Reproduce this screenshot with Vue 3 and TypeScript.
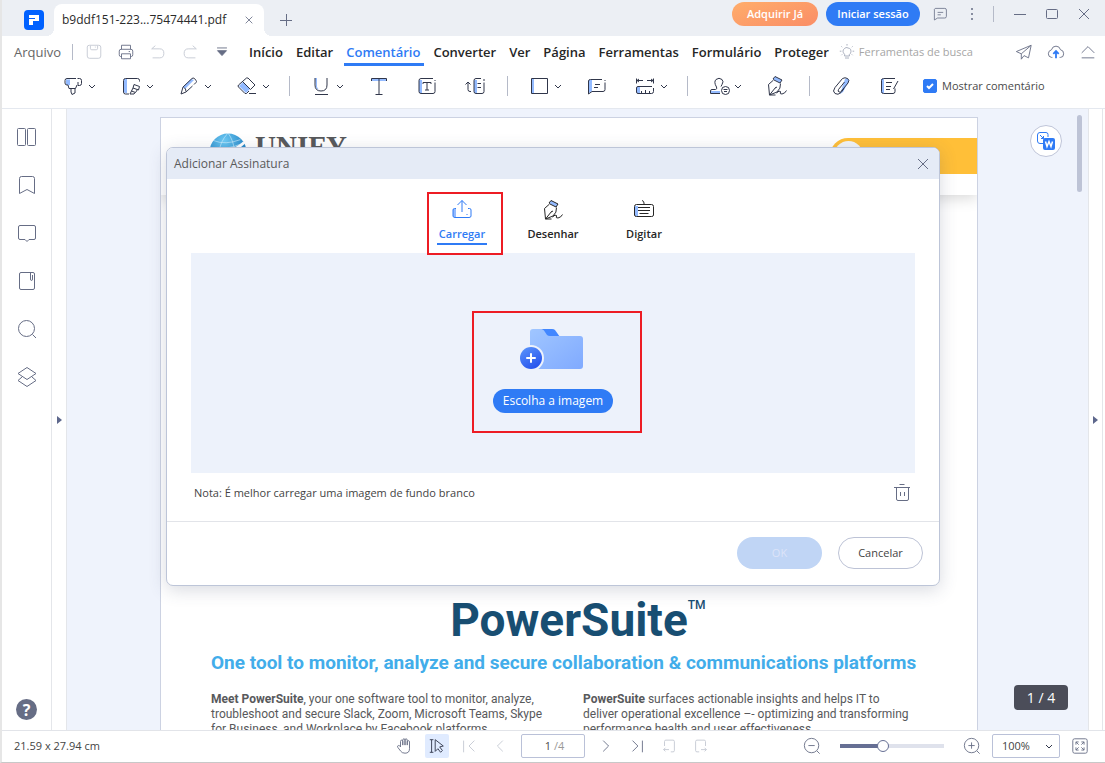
<script setup lang="ts">
import { ref } from 'vue'

interface Tool {
  icon?: string
  label?: string
  menu?: boolean
}

const menus = ['Início', 'Editar', 'Comentário', 'Converter', 'Ver', 'Página', 'Ferramentas', 'Formulário', 'Proteger']
const activeMenu = ref('Comentário')
const showComments = ref(true)
const pageNumber = ref('1')
const zoom = ref('100%')
const zoomLevel = ref(40)
const signatureTab = ref('Carregar')

const icons: Record<string, string> = {
  highlighter:
    '<path class="tint" d="M3 3.500h4v5.500h-3l-1-1z"/><path d="M13 2.500H4q-2 0-2 2V7q0 2 2 2h1l1 3.500h6.500L14 9M14.500 2.500h2q2 0 2 2v3q0 2-2 2H15V6M8 12.500v3.500l1 2.500 3-1.500v-4.500"/>',
  area:
    '<path class="tint" d="M3 3h3v14H4l-1-1z"/><path d="M18.500 5.500v-1q0-2-2-2H4.500q-2 0-2 2V16q0 2 2 2H8M13 8.500l5.500 2-1 3.500-5.500-2zM12 12l-1.500 3 4 1.500 2-3M10.500 15 9 18h4l1-1.500"/>',
  pencil:
    '<path class="tint" d="M4 11 12 3l3 1-9 9z"/><path d="m2 18 2-7 9-8.500q1-1 2.500 0l1.500 2q1 1 0 2L15 8.500M13.500 10 7 16l-5 2M5 11.500q2 1 2 4"/>',
  eraser:
    '<path class="tint" d="m2 10 4-4 7 7-4 4z"/><path d="m11 2 7 7-4.500 4.500M12 15l-2.500 2.500H8L1.500 11q-1-1 0-2l8-7h1.500M6 6l7.500 7.500M12 17.500h7"/>',
  underline:
    '<path class="tint" d="M4 2h2v9l2 3-3-2z"/><path d="M4 2v7q0 6 6 6t6-6V2M4 18.500h13"/>',
  text: '<path class="tint" d="M3 2h14v3H3z"/><path d="M2.500 5V2.500h15V5M10 3v15M6.500 18.500h7"/>',
  textbox:
    '<path class="tint" d="M2 4h3v13H3l-1-1z"/><path d="M16 2.500H4q-2 0-2 2v11q0 2 2 2h12q2 0 2-2v-9M18 5V4M6 8V6.500h8V8M10 6.500V14M8 14h4"/>',
  callout:
    '<path class="tint" d="M9 4h3v13h-2l-1-1z"/><path d="M16 2.500h-5q-2 0-2 2v11q0 2 2 2h6q2 0 2-2v-9M19 5V3M12.500 7.500H16M12.500 11.500H16M6 15.500H5q-2 0-2-2V6.500M.5 8.500l2.500-2.500 2.500 2.500"/>',
  shape: '<path class="tint" d="M2 3h3v14H2z"/><path d="M2.500 2.500h16v15h-16z"/>',
  note:
    '<path class="tint" d="M2 4h3v11l-3 2z"/><path d="M15 3.500H3.500q-2 0-2 1.500v13L5 15.500h11q2 0 2-2v-7M18 5V4M8 8.500h5M7 11.500h4"/>',
  measure:
    '<path class="tint" d="M2 11h3v6H2z"/><path d="M1.500 2.500v5M18.500 2.500v5M2 4.500h6M12 4.500h6M4 3 2 4.500 4 6M16 3l2 1.500L16 6M17 10.500H3q-1.500 0-1.500 1.500v4q0 1.500 1.500 1.500h13.500q2 0 2-2V12M6.500 17v-2M10.500 17v-3M14.500 17v-2"/>',
  stamp:
    '<path class="tint" d="M2 15h9v3H2z"/><path d="M11 17.500H1.500V15q0-1.500 1.500-1.500h3.500q2-.5 1-2.500-3-5-.5-7.500 3-2.500 6 0 2 2 0 5l-1 2"/><circle cx="16.500" cy="14.500" r="4"/><path d="M14.500 13.500h4M15 15.500h3"/>',
  pen:
    '<path class="tint" d="m6 3 2-2.500L15 4l-2 3z"/><path d="M8 .5 15 4M6 3 8 .5M6 3.500l7 3.500 2-3M6 4.500 1.500 8.500l1 10.500h6M2.500 19l7.500-3q4-3.500 3.500-8.500M2.500 19l6-7.500M8 12l2-1M9.500 17q3-3 4-1.500-1 3 1.500 2.500 3-.5 4.500-3.500"/>',
  clip:
    '<path class="tint" d="m14 3 3-1 1 3-6 11-3 2z"/><path d="m13.500 6-6 7.500q-1 2 .5 2.500t2.500-1L17 7q2-3-.5-4.500t-5 0L4 11.500q-3 4 0 6t6-1l3-4"/>',
  manage:
    '<path class="tint" d="M2 3h3v14H2z"/><path d="M16 2.500H4.500q-2 0-2 2V15.500q0 2 2 2h9.500q2 0 2-2v-3M7 6.500h6M7 10.500h5M7 13.500h4M19 5l-4.500 8"/>',
  upload:
    '<path class="tint" d="M1 9h3v8H2l-1-1z"/><path d="M4 8.500H2.500Q1 8.500 1 10v6q0 1.500 2 1.500h14q2 0 2-1.500v-6q0-1.500-1.500-1.500H16M10 12V.5M5.500 5 10 .5 14.500 5M14.500 14.500h1"/>',
  keyboard:
    '<path class="tint" d="M1 6h3v10H1z"/><path d="M3 4.500h14.500q2 0 2 2V15q0 1.500-2 1.500H2.500q-2 0-2-1.500V6.500q0-2 2-2zM10 4.500V3Q10 1 8 .5M4 7.500h12M4 10.500h12M5.500 13.500h9"/>',
  save: '<path d="M5 2.500h10q2.500 0 2.500 2v10q0 2.500-2.500 2.500H5q-2.500 0-2.500-2.500v-10q0-2 2.500-2zM6 3v3q0 1.500 1.500 1.500h5q1.500 0 1.500-1.500V3M11.500 4v1"/>',
  print: '<path d="M5 7V2.500h10V7M5 15H4q-1.500 0-1.500-2V9q0-2 2-2h11q2 0 2 2v4q0 2-1.500 2h-1M5 12h10v5.500H5zM13 9.500h1.500"/>',
  undo: '<path d="M7 3 3 6.500h9q4.500 0 4.500 5t-4.500 5H4"/>',
  redo: '<path d="m13 3 4 3.500H8q-4.500 0-4.500 5t4.500 5h8"/>',
  bulb: '<path d="M7 13q-2-2-2-4t2-3.500T10 4.500t3 1T15 9t-2 4v2H7zM7.500 17.500h5M10 0v2M3 3l1 1M17 3l-1 1M1 9h2M17 9h2M3 14l1-1M17 14l-1-1"/>',
  send: '<path d="M18 2.500 1.500 9.500 7 12v6l3-4 5 2.500zM17.500 3 7 12"/>',
  cloud: '<path d="M6 16H5q-3.500-.5-3.500-4T5 7.500q1-4 5-4t5 4q3.500.500 3.500 4.500T15 16h-1"/><path class="strong" d="M10 17V9.500M7 12l3-3 3 3"/>',
  collapse: '<path d="m3 11 7-7 7 7M3 16.500h14"/>',
  chat: '<path d="M4 3h12q2 0 2 2v8q0 2-2 2H7l-4 2.500V4zM7 8h7M7 11h4"/>',
  pages: '<path d="M1.500 1.500h6q1 0 1 1v15q0 1-1 1h-6q-1 0-1-1v-15q0-1 1-1zM11.500 1.500h6q1 0 1 1v15q0 1-1 1h-6q-1 0-1-1v-15q0-1 1-1z"/>',
  bookmark: '<path d="M2.500 18.500v-15q0-2 2-2h11q2 0 2 2v15L10 14.500z"/>',
  comment: '<path d="M3 2.500h14q1.500 0 1.500 1.500v11q0 1.500-1.500 1.500h-5l-2 2-2-2H3Q1.500 16.500 1.500 15V4Q1.500 2.500 3 2.500z"/>',
  attach: '<path d="M4 1.500h12q1.500 0 1.500 1.500v14q0 1.500-1.500 1.500H4Q2.500 18.500 2.500 17V3Q2.500 1.500 4 1.500zM13.500 2v6q0 1.500 1 1.500t1-1.500V4"/>',
  search: '<circle cx="9.500" cy="9.500" r="8"/><path d="m15.500 15.500 3.500 3.500"/>',
  layers: '<path d="m10 .5 9 6-9 6-9-6zM5 10l-4 3.500 9 6 9-6-4-3.500"/>',
  trash: '<path d="M2 4.500h16M7.500 1.500h5M4.500 4.500V16q0 1.500 1.500 1.500h9q1.500 0 1.500-1.500V4.500M8.500 9v4M12.500 9v4"/>',
  hand: '<path d="M5 11V5q0-1.500 1.200-1.500T7.500 5v4V3.500Q7.500 2 8.800 2T10 3.500V9 3.500Q10 2 11.200 2t1.300 1.500V9 5.500q0-1.500 1.200-1.500T15 5.500V13q0 5-5 5-3.500 0-5-2.500l-3-4Q1 10 2.500 9.500T5 11z"/>',
  select: '<path d="M2 3h4M4 3v14M2 17h4"/><path d="m8 3 9 7-4 1 3 4-2 2-3-4-3 3z"/>',
  first: '<path d="M4 4v13M16 4l-6 6 6 6"/>',
  prev: '<path d="m12 4-6 6 6 6"/>',
  next: '<path d="m8 4 6 6-6 6"/>',
  last: '<path d="m5 4 6 6-6 6M16 4v13"/>',
  back: '<path d="M5 10V5q0-1.500 1.500-1.500h8Q16 3.500 16 5v10q0 1.500-1.500 1.500H12M10 14H4M6 12l-2 2 2 2"/>',
  forward: '<path d="M15 10V5q0-1.500-1.500-1.500h-8Q4 3.500 4 5v10q0 1.500 1.500 1.500H8M10 14h6M14 12l2 2-2 2"/>',
  minus: '<circle cx="9.500" cy="9.500" r="8"/><path d="m15.500 15.500 3 3M6 9.500h7"/>',
  plus: '<circle cx="9.500" cy="9.500" r="8"/><path d="m15.500 15.500 3 3M6 9.500h7M9.500 6v7"/>',
  full: '<path d="M4 2h12q2 0 2 2v12q0 2-2 2H4q-2 0-2-2V4q0-2 2-2zM5.500 8.500v-3h3M11.500 5.500h3v3M5.500 11.500v3h3M11.500 14.500h3v-3M5.500 5.500l3 3M14.500 5.500l-3 3M5.500 14.500l3-3M14.500 14.500l-3-3"/>',
}

const tools: Tool[] = [
  { icon: 'highlighter', label: 'Realçar', menu: true },
  { icon: 'area', label: 'Realçar área', menu: true },
  { icon: 'pencil', label: 'Lápis', menu: true },
  { icon: 'eraser', label: 'Borracha', menu: true },
  {},
  { icon: 'underline', label: 'Sublinhar', menu: true },
  { icon: 'text', label: 'Texto' },
  { icon: 'textbox', label: 'Caixa de texto' },
  { icon: 'callout', label: 'Chamada' },
  {},
  { icon: 'shape', label: 'Forma', menu: true },
  { icon: 'note', label: 'Nota' },
  { icon: 'measure', label: 'Medir', menu: true },
  {},
  { icon: 'stamp', label: 'Carimbo', menu: true },
  { icon: 'pen', label: 'Assinatura' },
  {},
  { icon: 'clip', label: 'Anexo' },
  { icon: 'manage', label: 'Gerir comentários' },
]

const sideItems: Tool[] = [
  { icon: 'pages', label: 'Miniaturas' },
  { icon: 'bookmark', label: 'Marcadores' },
  { icon: 'comment', label: 'Comentários' },
  { icon: 'attach', label: 'Anexos' },
  { icon: 'search', label: 'Pesquisar' },
  { icon: 'layers', label: 'Camadas' },
]

const tabs = [
  { name: 'Carregar', icon: 'upload' },
  { name: 'Desenhar', icon: 'pen' },
  { name: 'Digitar', icon: 'keyboard' },
]
</script>

<template>
  <div class="window">
    <header class="titlebar">
      <svg class="brand" viewBox="0 0 20 20"><rect width="20" height="20" rx="4" fill="#0061ff" /><path fill="#fff" d="M5 5h10v6H9v4H5V9h6V8H5z" /></svg>
      <div class="doc-tab">
        <span>b9ddf151-223...75474441.pdf</span>
        <button aria-label="Fechar separador"><svg class="cross small" viewBox="0 0 12 12"><path d="m2 2 8 8M10 2l-8 8" /></svg></button>
      </div>
      <button class="new-tab" aria-label="Novo separador"><svg class="cross" viewBox="0 0 12 12"><path d="M6.500 0v12M0 6.500h12" /></svg></button>
      <div class="window-actions">
        <button class="pill orange">Adquirir Já</button>
        <button class="pill blue">Iniciar sessão</button>
        <button class="flat" aria-label="Mensagens"><svg class="ico chat" viewBox="0 0 20 20" v-html="icons.chat"></svg></button>
        <button class="flat" aria-label="Mais"><svg class="dots" viewBox="0 0 4 14"><circle cx="2" cy="2" r="1" /><circle cx="2" cy="7" r="1" /><circle cx="2" cy="12" r="1" /></svg></button>
        <i class="rule"></i>
        <button class="flat" aria-label="Minimizar"><svg class="cross" viewBox="0 0 12 12"><path d="M0 6.500h12" /></svg></button>
        <button class="flat" aria-label="Maximizar"><svg class="cross" viewBox="0 0 12 12"><rect x=".5" y="1.500" width="11" height="9" rx="1" /></svg></button>
        <button class="flat" aria-label="Fechar"><svg class="cross" viewBox="0 0 12 12"><path d="m1 1 10 10M11 1 1 11" /></svg></button>
      </div>
    </header>

    <div class="menubar">
      <button class="file">Arquivo</button>
      <i class="rule"></i>
      <div class="quick">
        <button class="faded" aria-label="Guardar"><svg class="ico" viewBox="0 0 20 20" v-html="icons.save"></svg></button>
        <button aria-label="Imprimir"><svg class="ico" viewBox="0 0 20 20" v-html="icons.print"></svg></button>
        <button class="faded" aria-label="Desfazer"><svg class="ico" viewBox="0 0 20 20" v-html="icons.undo"></svg></button>
        <button class="faded" aria-label="Refazer"><svg class="ico" viewBox="0 0 20 20" v-html="icons.redo"></svg></button>
        <button aria-label="Personalizar"><svg class="ico" viewBox="0 0 20 20"><path d="M4.500 5.500h11" /><path fill="currentColor" d="M5 8.500h10L10 14z" /></svg></button>
      </div>
      <nav>
        <button v-for="m in menus" :key="m" :class="{ active: m === activeMenu }" @click="activeMenu = m">{{ m }}</button>
      </nav>
      <label class="find">
        <svg class="ico" viewBox="0 0 20 20" v-html="icons.bulb"></svg>
        <input type="text" placeholder="Ferramentas de busca" aria-label="Ferramentas de busca" />
      </label>
      <div class="share">
        <button aria-label="Partilhar"><svg class="ico" viewBox="0 0 20 20" v-html="icons.send"></svg></button>
        <button aria-label="Enviar para a nuvem"><svg class="ico" viewBox="0 0 20 20" v-html="icons.cloud"></svg></button>
        <button aria-label="Recolher"><svg class="ico" viewBox="0 0 20 20" v-html="icons.collapse"></svg></button>
      </div>
    </div>

    <div class="toolbar">
      <template v-for="(t, i) in tools" :key="i">
        <button v-if="t.icon" class="tool" :class="{ single: !t.menu }" :aria-label="t.label">
          <svg class="ico" viewBox="0 0 20 20" v-html="icons[t.icon]"></svg>
          <svg v-if="t.menu" class="chevron" viewBox="0 0 10 10"><path d="m2 4 3 3 3-3" /></svg>
        </button>
        <i v-else class="rule"></i>
      </template>
      <label class="check"><input v-model="showComments" type="checkbox" /><span>Mostrar comentário</span></label>
    </div>

    <main class="workspace">
      <aside class="sidebar">
        <button v-for="s in sideItems" :key="s.label" :aria-label="s.label"><svg class="ico" viewBox="0 0 20 20" v-html="icons[s.icon!]"></svg></button>
        <button class="help" aria-label="Ajuda">?</button>
      </aside>
      <button class="handle left" aria-label="Abrir painel esquerdo"><i></i></button>
      <section class="canvas">
        <article class="page">
          <div class="page-head">
            <div class="logo">
              <svg class="globe" viewBox="0 0 40 40">
                <defs><radialGradient id="sea" cx=".4" cy=".2" r=".8"><stop offset="0" stop-color="#6ecbf5" /><stop offset="1" stop-color="#0a6cb5" /></radialGradient></defs>
                <circle cx="20" cy="20" r="19.500" fill="url(#sea)" />
                <g fill="none" stroke="#d9f2ff" stroke-width=".6"><path d="M20 0q-9 10-9 20M20 0q6 8 7 20M5 8q12 5 28-1M1 15q16 4 34-4" /><path stroke="#fff" stroke-width="3" d="M18 20Q30 17 37 10" /></g>
              </svg>
              <span>UNIFY</span>
            </div>
            <div class="banner"><i></i></div>
          </div>
          <div class="page-body">
            <h1><span>PowerSuite<sup>TM</sup></span></h1>
            <h2>One tool to monitor, analyze and secure collaboration &amp; communications platforms</h2>
            <div class="columns">
              <p><b>Meet PowerSuite</b>, your one software tool to monitor, analyze,<br />troubleshoot and secure Slack, Zoom, Microsoft Teams, Skype<br />for Business, and Workplace by Facebook platforms.</p>
              <p><b>PowerSuite</b> surfaces actionable insights and helps IT to<br />deliver operational excellence –- optimizing and transforming<br />performance health and user effectiveness.</p>
            </div>
          </div>
        </article>
        <button class="to-word" aria-label="Converter para Word">
          <svg viewBox="0 0 20 20"><path fill="none" stroke="#2f7bf5" d="M7 12.500H4q-2.500 0-2.500-2.500V4Q1.500 1.500 4 1.500h6q2 0 2 2V6M4 4l3.500 3.500M5 7.500h2.500V5" /><rect x="7" y="7" width="12" height="12" rx="2" fill="#2f7bf5" /><path fill="none" stroke="#fff" stroke-width="1.500" d="m9.500 10.500 1.500 5 2-5 2 5 1.500-5" /></svg>
        </button>
        <i class="scroll-thumb"></i>
        <div class="page-badge">1 / 4</div>
      </section>
      <button class="handle right" aria-label="Abrir painel direito"><i></i></button>
    </main>

    <footer class="status">
      <span class="size">21.59 x 27.94 cm</span>
      <div class="navigate">
        <button aria-label="Mão"><svg class="ico" viewBox="0 0 20 20" v-html="icons.hand"></svg></button>
        <button class="picked" aria-label="Selecionar"><svg class="ico" viewBox="0 0 20 20" v-html="icons.select"></svg></button>
        <button class="faded" aria-label="Primeira"><svg class="ico" viewBox="0 0 20 20" v-html="icons.first"></svg></button>
        <button class="faded" aria-label="Anterior"><svg class="ico" viewBox="0 0 20 20" v-html="icons.prev"></svg></button>
        <label class="pager"><input v-model="pageNumber" type="text" aria-label="Página" /><span>/4</span></label>
        <button aria-label="Seguinte"><svg class="ico" viewBox="0 0 20 20" v-html="icons.next"></svg></button>
        <button aria-label="Última"><svg class="ico" viewBox="0 0 20 20" v-html="icons.last"></svg></button>
        <button class="faded" aria-label="Vista anterior"><svg class="ico" viewBox="0 0 20 20" v-html="icons.back"></svg></button>
        <button class="faded" aria-label="Vista seguinte"><svg class="ico" viewBox="0 0 20 20" v-html="icons.forward"></svg></button>
      </div>
      <div class="zoom">
        <button aria-label="Reduzir"><svg class="ico" viewBox="0 0 20 20" v-html="icons.minus"></svg></button>
        <input v-model="zoomLevel" class="slider" type="range" min="0" max="100" aria-label="Zoom" />
        <button aria-label="Ampliar"><svg class="ico" viewBox="0 0 20 20" v-html="icons.plus"></svg></button>
        <div class="zoom-select">
          <select v-model="zoom" aria-label="Nível de zoom"><option>50%</option><option>100%</option><option>200%</option></select>
          <svg class="chevron" viewBox="0 0 10 10"><path d="m2 4 3 3 3-3" /></svg>
        </div>
        <button aria-label="Ecrã inteiro"><svg class="ico" viewBox="0 0 20 20" v-html="icons.full"></svg></button>
      </div>
    </footer>

    <div class="overlay">
      <section class="dialog" role="dialog" aria-labelledby="dialog-title">
        <header>
          <span id="dialog-title">Adicionar Assinatura</span>
          <button aria-label="Fechar janela"><svg class="cross" viewBox="0 0 12 12"><path d="m1 1 10 10M11 1 1 11" /></svg></button>
        </header>
        <div class="tabs">
          <button v-for="t in tabs" :key="t.name" :class="{ current: t.name === signatureTab }" @click="signatureTab = t.name">
            <svg class="ico" viewBox="0 0 20 20" v-html="icons[t.icon]"></svg>
            <span>{{ t.name }}</span>
          </button>
        </div>
        <div class="drop">
          <div class="chooser">
            <svg class="folder" viewBox="0 0 66 42">
              <defs>
                <linearGradient id="fold" x2="1" y2="1"><stop stop-color="#a0c6ff" /><stop offset="1" stop-color="#80aaff" /></linearGradient>
                <linearGradient id="disc" x1=".2" x2=".8" y2="1"><stop stop-color="#5790fa" /><stop offset="1" stop-color="#2450ec" /></linearGradient>
              </defs>
              <path fill="#4287ff" d="M22 1h11q2 0 3 1l5 7H27z" />
              <path fill="url(#fold)" d="M14 1h8q2 0 3 1.500L28 7q1 1 3 1h30q3 0 3 3v27q0 3-3 3H14q-3 0-3-3V4q0-3 3-3z" />
              <circle cx="12" cy="30" r="13" fill="#edf2fb" /><circle cx="12" cy="30" r="11" fill="url(#disc)" />
              <path stroke="#fff" stroke-width="2" stroke-linecap="round" d="M8 30h8M12 26v8" />
            </svg>
            <button>Escolha a imagem</button>
          </div>
        </div>
        <div class="note">
          <span>Nota: É melhor carregar uma imagem de fundo branco</span>
          <button aria-label="Eliminar"><svg class="ico" viewBox="0 0 20 20" v-html="icons.trash"></svg></button>
        </div>
        <footer>
          <button class="ok" disabled>OK</button>
          <button class="cancel">Cancelar</button>
        </footer>
      </section>
    </div>
  </div>
</template>

<style>
html, body, #app { height: 100%; margin: 0; }
</style>

<style scoped>
* { box-sizing: border-box; }
.window {
  position: relative;
  display: flex;
  flex-direction: column;
  height: 100vh;
  overflow: hidden;
  border-left: 2px solid #e6e6e6;
  border-bottom: 1px solid #c8c8c8;
  background: #fff;
  color: #444;
  font: 11px/16px "Open Sans", "Noto Sans", sans-serif;
}
button { display: flex; align-items: center; justify-content: center; padding: 0; border: 0; background: none; color: inherit; font: inherit; white-space: nowrap; cursor: pointer; }
input, select { font: inherit; color: inherit; }
svg { display: block; flex: none; }
.ico { width: 20px; height: 20px; overflow: visible; fill: none; stroke: currentColor; stroke-width: 1; }
.ico :deep(.tint) { fill: #94bbff; stroke: none; }
.ico :deep(.strong) { stroke: #2f7bf5; stroke-width: 2; }
.cross { width: 12px; height: 12px; fill: none; stroke: #666d85; }
.cross.small { width: 10px; height: 10px; }
.chevron { width: 10px; height: 10px; fill: none; stroke: #30364a; }
.rule { flex: none; width: 1px; height: 20px; background: #b5bac8; }

.titlebar { flex: none; display: flex; align-items: center; height: 36px; padding-left: 22px; background: #eceff4; }
.brand { width: 20px; height: 20px; margin-top: 4px; }
.doc-tab { position: relative; display: flex; align-items: center; justify-content: space-between; align-self: flex-end; width: 210px; height: 32px; margin-left: 10px; padding: 0 8px; border-radius: 8px 8px 0 0; background: #fff; color: #2a2a2a; font-size: 12px; }
.doc-tab::before, .doc-tab::after { content: ""; position: absolute; bottom: 0; width: 8px; height: 8px; }
.doc-tab::before { left: -8px; background: radial-gradient(circle at 0 0, #eceff4 8px, #fff 8px); }
.doc-tab::after { right: -8px; background: radial-gradient(circle at 100% 0, #eceff4 8px, #fff 8px); }
.doc-tab button { width: 14px; height: 14px; }
.new-tab { width: 28px; height: 28px; margin: 4px 0 0 8px; }
.window-actions { display: flex; align-items: center; align-self: flex-start; height: 28px; margin-left: auto; padding-right: 5px; }
.pill { height: 24px; padding: 0; border-radius: 12px; color: #fff; font-weight: 600; }
.orange { width: 86px; margin-right: 8px; background: linear-gradient(160deg, #ffad6b, #fa8d66); }
.blue { width: 94px; margin-right: 4px; background: #2f7bf5; }
.flat { width: 32px; height: 28px; color: #666d85; }
.chat { width: 16px; height: 16px; }
.dots { width: 4px; height: 14px; fill: #666d85; }
.window-actions .rule { height: 16px; margin: 0 10px 0 5px; }

.menubar { flex: none; display: flex; align-items: center; height: 32px; padding: 0 8px 0 12px; font-size: 13px; color: #666; }
.menubar .rule { height: 16px; margin-left: 11px; }
.quick { display: flex; gap: 14px; margin-left: 12px; color: #666d85; }
.quick button { width: 18px; height: 20px; }
.quick .ico { width: 18px; height: 18px; }
.faded { color: #c4c8d2; }
nav { display: flex; gap: 13px; margin-left: 18px; }
nav button { position: relative; height: 28px; color: #262626; font-weight: 600; }
nav .active { color: #2f7bf5; }
nav .active::after { content: ""; position: absolute; left: -2px; right: -4px; bottom: 0; height: 3px; background: #2f7bf5; }
.find { display: flex; align-items: center; gap: 4px; margin-left: 10px; flex: 1; min-width: 0; }
.find .ico { width: 16px; height: 16px; color: #989eb0; }
.find input { flex: 1; min-width: 0; padding: 0; border: 0; outline: 0; background: none; font-size: 11px; }
.find input::placeholder { color: #a6a6a6; opacity: 1; }
.share { display: flex; gap: 14px; color: #666d85; }
.share button, .share .ico { width: 18px; height: 18px; }

.toolbar { flex: none; display: flex; align-items: center; gap: 24px; height: 41px; padding: 0 0 4px 61px; border-bottom: 1px solid #e4e8ef; color: #30364a; }
.tool { gap: 4px; }
.tool.single { margin-right: 4px; }
.toolbar .rule { margin: 0 -3px 0 -6px; }
.check { display: flex; align-items: center; gap: 5px; margin-left: -4px; color: #4a4a4a; white-space: nowrap; }
.check input { appearance: none; width: 14px; height: 14px; margin: 0; border-radius: 2px; border: 1px solid #2f7bf5; }
.check input:checked { background: #2f7bf5 url("data:image/svg+xml,%3Csvg xmlns='http://www.w3.org/2000/svg' viewBox='0 0 12 12'%3E%3Cpath d='m3 6 2 2 4-4' fill='none' stroke='white' stroke-width='2'/%3E%3C/svg%3E") center / 12px; }

.workspace { flex: 1; display: flex; min-height: 0; padding-right: 2px; }
.sidebar { display: flex; flex-direction: column; align-items: center; gap: 28px; width: 50px; padding: 18px 0 10px; border-right: 1px solid #e4e6ea; color: #666d85; }
.sidebar button { flex: none; width: 20px; height: 20px; }
.sidebar .ico { width: 20px; height: 20px; }
.sidebar .help { margin-top: auto; width: 21px; height: 21px; border-radius: 50%; background: #666d85; color: #fff; font-size: 16px; font-weight: 700; }
.handle { width: 15px; }
.handle.left { border-right: 1px solid #e4e6ea; }
.handle.right { border-left: 1px solid #e4e6ea; border-right: 1px solid #e4e6ea; }
.handle i { border: 4px solid transparent; border-left: 5px solid #5d678c; border-right: 0; }
.canvas { position: relative; flex: 1; min-width: 0; padding: 8px 110px 0 93px; overflow: hidden; background: #eff3fc; }
.page { height: 100%; border: 1px solid #ccd2e2; border-bottom: 0; background: #fff; color: #58595b; font-family: Roboto, sans-serif; }
.page-head { display: flex; justify-content: space-between; height: 77px; box-shadow: 0 3px 14px rgba(0, 0, 0, 0.16); clip-path: inset(0 0 -20px 0); }
.logo { display: flex; align-items: flex-start; gap: 8px; padding: 15px 0 0 48px; font: 700 29px/26px "Liberation Serif", serif; }
.globe { width: 38px; height: 38px; }
.banner { width: 147px; height: 36px; margin-top: 20px; padding: 3px 0 0 4px; border-radius: 18px 0 0 18px; background: #ffbf38; }
.banner i { display: block; width: 29px; height: 29px; border-radius: 50%; background: #f1f4f8; }
.page-body { padding: 400px 50px 0; }
h1 { margin: 0; text-align: center; color: #184e72; font-size: 46px; line-height: 50px; font-weight: 700; }
h1 span { position: relative; }
h1 sup { position: absolute; left: 100%; top: 2px; font-size: 12px; line-height: 20px; font-weight: 500; }
h2 { margin: 6px 0 0; color: #42adea; font-size: 19px; line-height: 24px; font-weight: 700; white-space: nowrap; }
.columns { display: grid; grid-template-columns: 1fr 1fr; gap: 28px; margin-top: 17px; font-size: 12px; line-height: 15px; white-space: nowrap; }
.columns p { margin: 0; }
.to-word { position: absolute; top: 16px; right: 26px; width: 32px; height: 32px; border: 1px solid #bfc5d9; border-radius: 50%; background: #fff; }
.to-word svg { width: 20px; height: 20px; }
.scroll-thumb { position: absolute; top: 6px; right: 6px; width: 5px; height: 77px; border-radius: 3px; background: #bdc3d6; }
.page-badge { position: absolute; right: 20px; bottom: 20px; width: 54px; height: 25px; border-radius: 4px; background: #4b4d59; color: #fff; font-size: 14px; line-height: 25px; text-align: center; }

.status { flex: none; display: flex; align-items: center; height: 32px; padding: 0 13px 2px 12px; border-top: 1px solid #e2e4e9; }
.size { width: 383px; }
.status button { width: 24px; height: 24px; color: #666d85; }
.status button.faded { color: #c4c8d2; }
.status .ico { width: 18px; height: 18px; }
.status .picked { border-radius: 2px; background: #e0ebff; color: #30364a; }
.navigate { display: flex; align-items: center; gap: 8px; margin-left: -4px; }
.pager { display: flex; align-items: center; width: 64px; height: 24px; border: 1px solid #bac1d8; border-radius: 2px; color: #999; }
.pager input { width: 29px; padding: 0; border: 0; outline: 0; background: none; color: #4a4a4a; text-align: right; }
.pager span { padding-left: 3px; }
.zoom { display: flex; align-items: center; margin-left: auto; }
.slider { appearance: none; width: 104px; height: 12px; margin: 0 16px; background: linear-gradient(90deg, #666f94 40%, #dfe2ec 40%) center / 100% 4px no-repeat; }
.slider::-webkit-slider-thumb { appearance: none; width: 12px; height: 12px; border: 1px solid #666f94; border-radius: 50%; background: #fff; }
.zoom-select { position: relative; width: 68px; margin: 0 8px; }
.zoom-select select { appearance: none; display: block; width: 100%; height: 24px; padding: 0 9px; border: 1px solid #bac1d8; border-radius: 2px; background: #fff; }
.zoom-select .chevron { position: absolute; top: 7px; right: 6px; pointer-events: none; }

.overlay { position: absolute; inset: 0 1px 0 0; display: flex; align-items: flex-start; justify-content: center; padding: 147px 16px 0; pointer-events: none; }
.dialog { width: 100%; max-width: 774px; overflow: hidden; border: 1px solid #bdc5d8; border-radius: 7px; background: #fff; box-shadow: 0 4px 18px rgba(60, 70, 100, 0.2); pointer-events: auto; }
.dialog header { display: flex; align-items: center; justify-content: space-between; height: 31px; padding: 0 10px 0 7px; background: #e5ebf6; color: #5a5a5a; font-size: 12px; }
.tabs { display: flex; justify-content: center; gap: 41px; padding: 21px 0 8px; color: #262626; }
.tabs button { position: relative; flex-direction: column; gap: 6px; width: 50px; height: 45px; justify-content: flex-start; border-bottom: 2px solid transparent; font-weight: 600; }
.tabs .current { border-color: #2f7bf5; color: #2f7bf5; }
.tabs .current::after { content: ""; position: absolute; inset: -8px -16px -12px -10px; border: 2px solid #ed1c24; }
.drop { display: flex; justify-content: center; height: 220px; margin: 0 24px; padding-top: 75px; background: #edf2fb; }
.chooser { position: relative; height: 85px; }
.chooser::after { content: ""; position: absolute; inset: -17px -29px -20px -21px; border: 2px solid #ed1c24; pointer-events: none; }
.folder { width: 66px; height: 42px; margin: 0 0 19px 26px; }
.chooser button { width: 120px; height: 24px; border-radius: 12px; background: #2f7bf5; color: #fff; font-size: 12px; }
.note { display: flex; align-items: center; justify-content: space-between; height: 49px; padding: 0 27px 8px; border-bottom: 1px solid #e2e4e9; }
.note .ico { color: #666d85; }
.dialog footer { display: flex; justify-content: flex-end; gap: 16px; padding: 15px 16px 16px; }
.dialog footer button { width: 85px; height: 32px; border-radius: 16px; }
.dialog footer .ok { background: #c0d5f5; color: #dce3f8; }
.dialog footer .cancel { border: 1px solid #bdc3d6; }
</style>
